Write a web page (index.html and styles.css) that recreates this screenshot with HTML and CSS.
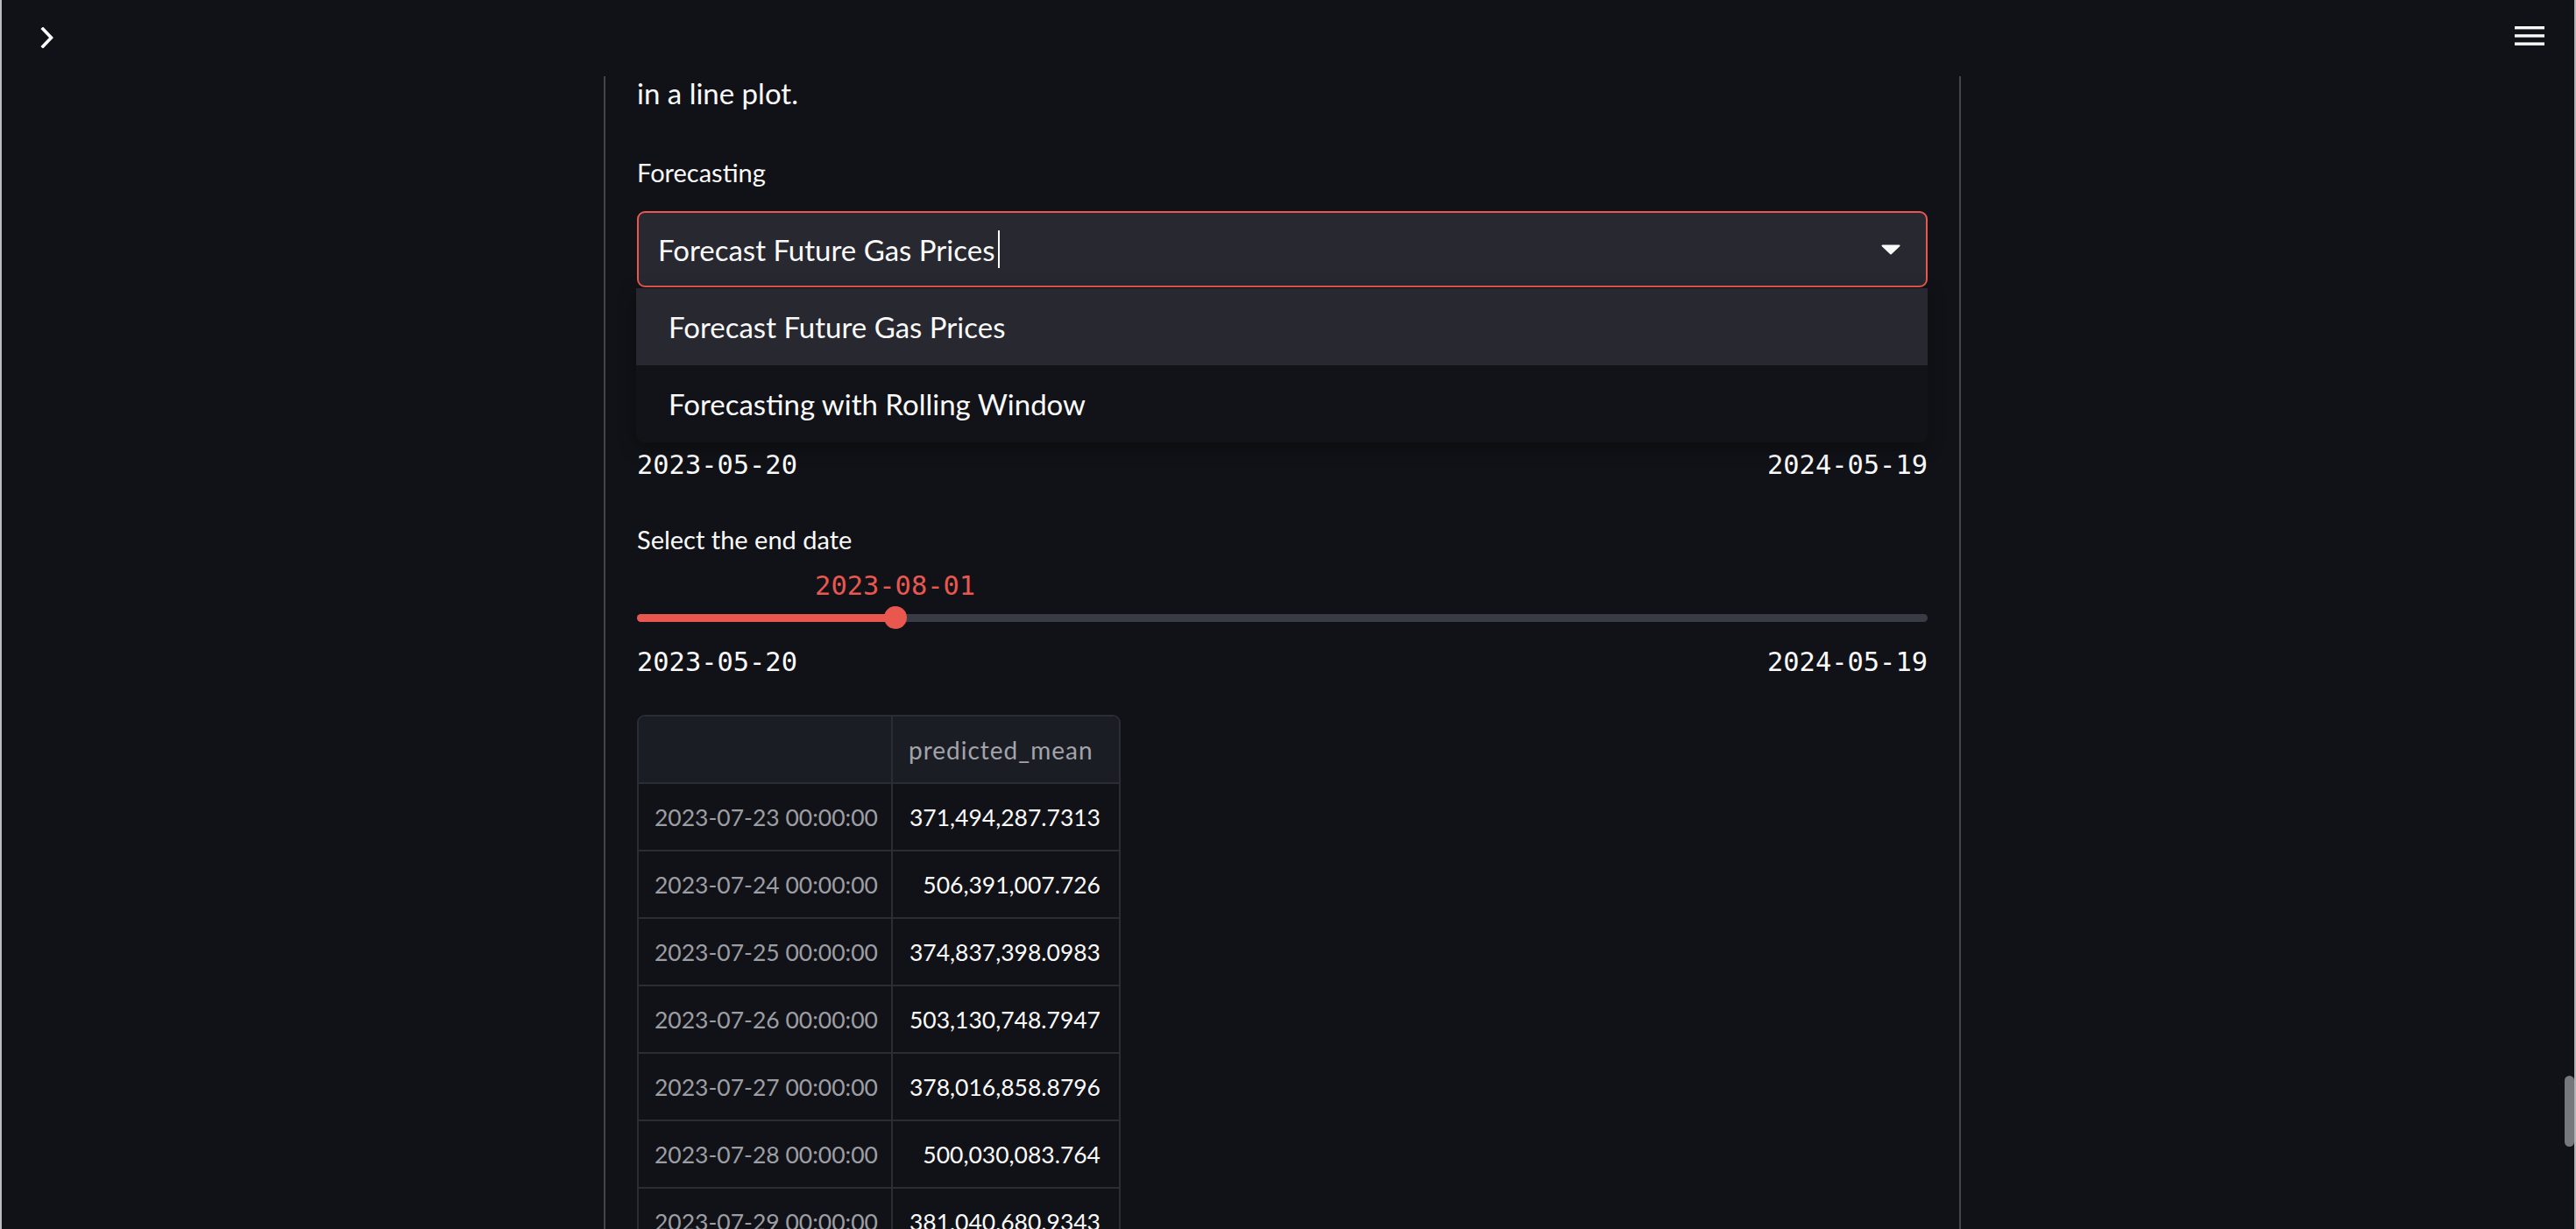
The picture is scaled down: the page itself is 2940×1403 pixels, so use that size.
FILE: index.html
```html
<!DOCTYPE html>
<html lang="en">
<head>
<meta charset="utf-8">
<title>Gas Price Forecasting</title>
<link rel="stylesheet" href="styles.css">
</head>
<body>
<div class="window">
  <header class="topbar">
    <button class="icon-btn" aria-label="Open sidebar">
      <svg class="chevron" width="16" height="24" viewBox="0 0 16 24"><polyline points="3,2 12.5,12 3,22" fill="none" stroke="#fafafa" stroke-width="3.6" stroke-linecap="square" stroke-linejoin="miter"/></svg>
    </button>
    <button class="icon-btn" aria-label="Main menu">
      <svg class="burger" width="34" height="22" viewBox="0 0 34 22"><rect x="0" y="0" width="34" height="3.4" fill="#fafafa"/><rect x="0" y="9.2" width="34" height="3.4" fill="#fafafa"/><rect x="0" y="18.4" width="34" height="3.4" fill="#fafafa"/></svg>
    </button>
  </header>

  <main class="main">
    <section class="block">
      <p class="para">in a line plot.</p>

      <div class="field">
        <div class="label">Forecasting</div>
        <div class="select">
          <span class="select-value">Forecast Future Gas Prices</span><span class="cursor"></span>
          <svg class="caret" width="22" height="12" viewBox="0 0 22 12"><polygon points="1.5,1.5 20.5,1.5 11,10.5" fill="#fafafa" stroke="#fafafa" stroke-width="2" stroke-linejoin="round"/></svg>
        </div>
        <ul class="menu">
          <li class="opt active">Forecast Future Gas Prices</li>
          <li class="opt">Forecasting with Rolling Window</li>
        </ul>
      </div>

      <div class="slider" style="--pct: 17.5%">
        <div class="label hidden-under">Select the start date</div>
        <div class="slider-value hidden-under"><span>2023-07-23</span></div>
        <div class="track-area"><div class="track"><div class="fill"></div></div><div class="thumb"></div></div>
        <div class="ticks"><span>2023-05-20</span><span>2024-05-19</span></div>
      </div>

      <div class="slider" style="--pct: 20%">
        <div class="label">Select the end date</div>
        <div class="slider-value"><span>2023-08-01</span></div>
        <div class="track-area"><div class="track"><div class="fill"></div></div><div class="thumb"></div></div>
        <div class="ticks"><span>2023-05-20</span><span>2024-05-19</span></div>
      </div>

      <div class="df">
        <table>
          <thead>
            <tr><th class="idx"></th><th class="col">predicted_mean</th></tr>
          </thead>
          <tbody>
            <tr><td class="idx">2023-07-23 00:00:00</td><td class="num">371,494,287.7313</td></tr>
            <tr><td class="idx">2023-07-24 00:00:00</td><td class="num">506,391,007.726</td></tr>
            <tr><td class="idx">2023-07-25 00:00:00</td><td class="num">374,837,398.0983</td></tr>
            <tr><td class="idx">2023-07-26 00:00:00</td><td class="num">503,130,748.7947</td></tr>
            <tr><td class="idx">2023-07-27 00:00:00</td><td class="num">378,016,858.8796</td></tr>
            <tr><td class="idx">2023-07-28 00:00:00</td><td class="num">500,030,083.764</td></tr>
            <tr><td class="idx">2023-07-29 00:00:00</td><td class="num">381,040,680.9343</td></tr>
          </tbody>
        </table>
      </div>
    </section>
  </main>

  <div class="scroll-thumb"></div>
</div>
</body>
</html>
```
FILE: styles.css
```css
* { box-sizing: border-box; }

html, body {
  margin: 0;
  padding: 0;
  background: #111217;
  overflow: hidden;
}

body {
  font-family: "Lato", "Noto Sans", sans-serif;
  color: #fafafa;
}

.window {
  position: relative;
  width: 2940px;
  height: 1403px;
  overflow: hidden;
  border-left: 2px solid #bcbcbe;
  border-right: 2px solid #b4b4b6;
  background: #111217;
}

/* ---------- top bar (overlay, like Streamlit's fixed header) ---------- */
.topbar {
  position: absolute;
  top: 0;
  left: 0;
  right: 0;
  height: 87px;
  background: #111217;
  z-index: 10;
  display: flex;
  justify-content: space-between;
  align-items: flex-start;
  padding: 0 34px 0 44px;
}

.icon-btn {
  background: none;
  border: 0;
  padding: 0;
  margin: 0;
  display: flex;
}

.chevron { margin-top: 31px; }
.burger { margin-top: 30px; }

/* ---------- main column ---------- */
.main {
  padding-left: 687px;
}

.block {
  width: 1549px;
  min-height: 1600px;
  border-left: 2px solid #44454b;
  border-right: 2px solid #44454b;
  padding: 80px 36px 0 36px;
}

.para {
  margin: 0;
  font-size: 33px;
  line-height: 52px;
}

.label {
  font-size: 29px;
  line-height: 40px;
  height: 40px;
  color: #fafafa;
}

/* ---------- selectbox ---------- */
.field {
  position: relative;
  margin-top: 45px;
}

.select {
  margin-top: 24px;
  height: 87px;
  background: #272830;
  border: 2px solid #e9574f;
  border-radius: 9px;
  display: flex;
  align-items: center;
  padding: 0 29px 0 22px;
}

.select-value {
  font-size: 33px;
  line-height: 40px;
}

.cursor {
  width: 2px;
  height: 43px;
  background: #fafafa;
  margin-left: 4px;
}

.caret {
  margin-left: auto;
}

.menu {
  position: absolute;
  top: calc(100% + 1px);
  left: -1px;
  right: 0;
  margin: 0;
  padding: 0;
  list-style: none;
  background: #121319;
  border-radius: 0 0 9px 9px;
  overflow: hidden;
  z-index: 5;
  box-shadow: 0 6px 20px rgba(0, 0, 0, 0.35), 4px 4px 18px rgba(255, 255, 255, 0.015);
}

.opt {
  height: 88px;
  display: flex;
  align-items: center;
  padding-left: 37px;
  font-size: 33px;
  line-height: 40px;
}

.opt.active {
  background: #272830;
}

/* ---------- sliders ---------- */
.slider {
  margin-top: 43px;
}

.slider + .slider {
  margin-top: 45px;
}

.hidden-under { visibility: hidden; }

.slider-value {
  margin-top: 13px;
  height: 40px;
  padding-left: var(--pct);
  font-family: "DejaVu Sans Mono", "Liberation Mono", monospace;
  font-size: 30.4px;
  line-height: 40px;
  color: #e9574f;
  white-space: nowrap;
}

.slider-value span {
  display: inline-block;
  transform: translateX(-50%);
}

.track-area {
  position: relative;
  margin-top: 3px;
  height: 26px;
  display: flex;
  align-items: center;
}

.track {
  width: 100%;
  height: 9px;
  border-radius: 5px;
  background: #3a3c45;
  overflow: hidden;
}

.fill {
  width: var(--pct);
  height: 100%;
  background: #e9574f;
}

.thumb {
  position: absolute;
  top: 0;
  left: calc(var(--pct) - 13px);
  width: 26px;
  height: 26px;
  border-radius: 50%;
  background: #e9574f;
}

.ticks {
  margin-top: 18px;
  height: 40px;
  display: flex;
  justify-content: space-between;
  font-family: "DejaVu Sans Mono", "Liberation Mono", monospace;
  font-size: 30.4px;
  line-height: 40px;
  color: #fafafa;
}

/* ---------- dataframe ---------- */
.df {
  margin-top: 40px;
  width: 552px;
  border: 2px solid #2b2d35;
  border-bottom: 0;
  border-radius: 9px 9px 0 0;
  overflow: hidden;
}

.df table {
  width: 100%;
  border-collapse: separate;
  border-spacing: 0;
  font-size: 26.5px;
}

.df th,
.df td {
  height: 77px;
  border-bottom: 2px solid #2b2d35;
  padding: 0;
  white-space: nowrap;
}

.df thead th {
  height: 77px;
  background: #1b1d25;
  font-weight: 400;
}

.df .idx {
  width: 290px;
  border-right: 2px solid #2b2d35;
  padding-left: 18px;
  text-align: left;
  color: #9d9ea3;
}

.df .col {
  text-align: left;
  padding-left: 18px;
  color: #a3a4a9;
  font-size: 28px;
  letter-spacing: 1px;
}

.df .num {
  text-align: right;
  padding-right: 21px;
  color: #fafafa;
}

/* ---------- scrollbar thumb (overlay) ---------- */
.scroll-thumb {
  position: absolute;
  top: 1228px;
  right: 0;
  width: 11px;
  height: 81px;
  border-radius: 6px;
  background: #77787e;
  z-index: 20;
}
```
